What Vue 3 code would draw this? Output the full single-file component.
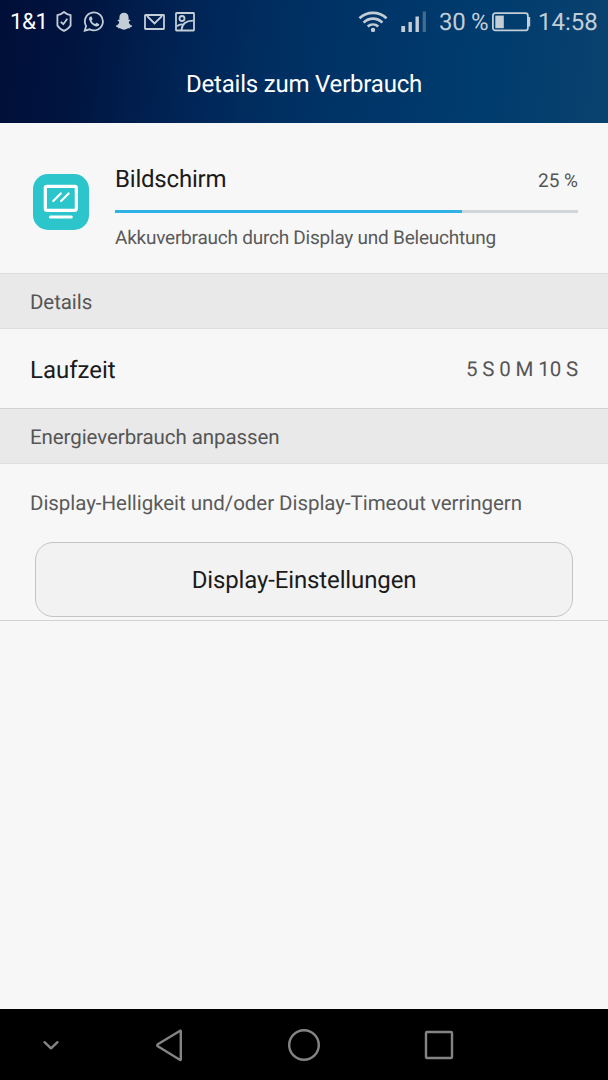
<script setup>
import { ref } from 'vue'

const usage = ref({
  name: 'Bildschirm',
  percent: 25,
  bar: 75,
  info: 'Akkuverbrauch durch Display und Beleuchtung'
})

const runtime = ref('5 S 0 M 10 S')
</script>

<template>
  <div class="screen">
    <header class="header">
      <div class="status">
        <span class="carrier">1&amp;1</span>
        <svg class="shield" width="16" height="22" viewBox="0 0 16 22">
          <path d="M8 1C6.200 2.600 4 3.700 1.400 4.200V14.500C2.600 16.800 5 18.500 8 19.900C11 18.500 13.400 16.800 14.600 14.500V4.200C12 3.700 9.800 2.600 8 1Z" />
          <path d="M4.800 10.800L7.300 13.200L11.300 7.800" />
        </svg>
        <svg class="whatsapp" width="22" height="22" viewBox="0 0 22 22">
          <path d="M1.800 19.600L3.100 14.900A9 9 0 1 1 6.600 18.300Z" />
          <path class="solid" d="M7.600 5.400C6.300 5.800 5.700 7.200 6.200 8.800C7.200 12 9.700 14.500 12.900 15.400C14.500 15.800 16 15 16.300 13.300L13.500 11.700L12.200 13.100C10.500 12.400 9.200 11.100 8.500 9.500L9.600 8.300L8.600 5.400Z" />
        </svg>
        <svg class="snap" width="18" height="20" viewBox="0 0 18 20">
          <path class="solid" d="M9 .8C11.800 .8 13.600 2.700 13.600 5.400V7.700C14.300 8 15.100 7.500 15.400 8.100C15.600 8.900 14.100 9.300 13.800 10C13.700 11.600 15.300 13.200 17.300 13.700C17.500 14.600 16 15 15.200 15.200L14.800 16.300C13 15.900 12.400 16.700 11.300 17.100C9.800 17.800 8.200 17.800 6.700 17.100C5.600 16.700 5 15.900 3.200 16.300L2.800 15.200C2 15 .5 14.600 .7 13.700C2.700 13.200 4.300 11.600 4.200 10C3.900 9.300 2.400 8.900 2.600 8.100C2.900 7.500 3.700 8 4.400 7.700V5.400C4.400 2.700 6.200 .8 9 .8Z" />
        </svg>
        <svg class="mail" width="21" height="17" viewBox="0 0 21 17">
          <rect x="1" y="1" width="19" height="14" rx=".5" />
          <path d="M3 2L10.500 9.500L18 2" />
        </svg>
        <svg class="picture" width="20" height="20" viewBox="0 0 20 20">
          <rect x="1" y="1" width="18" height="17.500" rx=".5" />
          <circle cx="7" cy="6.500" r="2.500" />
          <path d="M6.500 18C7 12.500 11 8.800 18 8.700M2 14.200C4.200 12.400 6.500 12 8.800 12.800" />
        </svg>
        <svg class="wifi" width="30" height="23" viewBox="0 0 30 23">
          <path d="M1.500 7.300C9 0 21 0 28.500 7.300M5.600 11.600C11 6.400 19 6.400 24.400 11.600M9.700 15.600C12.800 12.800 17.200 12.800 20.300 15.600" />
          <circle class="solid" cx="15" cy="18.900" r="2.200" />
        </svg>
        <svg class="signal" width="26" height="22" viewBox="0 0 26 22">
          <rect class="solid" x=".3" y="15" width="3.800" height="6" />
          <rect class="solid" x="7.500" y="11" width="3.400" height="10" />
          <rect class="solid" x="14.500" y="5.500" width="3.400" height="15.500" />
          <rect class="solid faded" x="21.700" y=".5" width="3.200" height="20.500" />
        </svg>
        <span class="battery-text">30 %</span>
        <svg class="battery" width="39" height="20" viewBox="0 0 39 20">
          <rect x=".9" y="1.200" width="35" height="17.200" rx="2.500" />
          <rect class="solid" x="3.300" y="3.600" width="8.500" height="12.600" />
          <path class="solid" d="M36 5H38.200V14.500H36Z" />
        </svg>
        <span class="clock">14:58</span>
      </div>
      <h1>Details zum Verbrauch</h1>
    </header>

    <main class="content">
      <div class="usage">
        <div class="app-icon">
          <svg width="56" height="56" viewBox="0 0 56 56">
            <rect x="12.300" y="12.300" width="31" height="24" rx="1.500" />
            <path d="M20.300 27L27.800 19.500M28.100 27L35.600 19.500" class="glare" />
            <path d="M17.500 43H38.200" />
          </svg>
        </div>
        <div class="usage-body">
          <div class="usage-top">
            <span class="name">{{ usage.name }}</span>
            <span class="percent">{{ usage.percent }} %</span>
          </div>
          <div class="bar">
            <div class="bar-fill" :style="{ width: usage.bar + '%' }"></div>
          </div>
          <p>{{ usage.info }}</p>
        </div>
      </div>

      <h2>Details</h2>
      <div class="row">
        <span class="name">Laufzeit</span>
        <span class="value">{{ runtime }}</span>
      </div>

      <h2>Energieverbrauch anpassen</h2>
      <div class="adjust">
        <p>Display-Helligkeit und/oder Display-Timeout verringern</p>
        <button type="button">Display-Einstellungen</button>
      </div>
    </main>

    <nav class="nav">
      <svg class="nav-hide" width="18" height="14" viewBox="0 0 18 14">
        <path d="M2.500 4.200L9 10.300L15.500 4.200" />
      </svg>
      <svg class="nav-back" width="30" height="38" viewBox="0 0 30 38">
        <path d="M25.800 5V33.500Q25.800 34.300 24.800 33.700L2.800 20.300Q1.600 19.300 2.800 18.300L24.800 4.900Q25.800 4.200 25.800 5Z" />
      </svg>
      <svg class="nav-home" width="34" height="38" viewBox="0 0 34 38">
        <circle cx="17" cy="19" r="14.800" />
      </svg>
      <svg class="nav-recent" width="30" height="34" viewBox="0 0 30 34">
        <rect x="2" y="4" width="26" height="26" rx="1" />
      </svg>
    </nav>
  </div>
</template>

<style>
body {
  margin: 0;
}
</style>

<style scoped>
.screen {
  display: flex;
  flex-direction: column;
  width: 608px;
  height: 1080px;
  background-color: #f7f7f7;
  font-family: Roboto, 'Liberation Sans', sans-serif;
  text-rendering: geometricPrecision;
  color: #1b1b1b;
}
h1, h2, p {
  margin: 0;
  font-weight: 400;
}
svg {
  display: block;
  flex-shrink: 0;
  fill: none;
}

.header {
  height: 123px;
  background: linear-gradient(97deg, #000f37 0%, #001440 13%, #002252 28%, #002d60 43%, #003568 60%, #003c6e 80%, #0a426f 100%);
}
.status {
  display: flex;
  align-items: center;
  height: 44px;
  padding-left: 10px;
  color: #c3cdd8;
  font-size: 24px;
  white-space: nowrap;
}
.status svg {
  stroke: #c3ced7;
  stroke-width: 1.8;
}
.status .solid {
  fill: #c3ced7;
  stroke: none;
}
.status .faded {
  opacity: 0.35;
}
.carrier {
  width: 46px;
  color: #fff;
  font-size: 22.500px;
  letter-spacing: -0.6px;
}
.whatsapp {
  margin-left: 11px;
}
.snap {
  margin-left: 10px;
}
.mail {
  margin-left: 11px;
}
.picture {
  margin-left: 10px;
}
.wifi {
  margin-left: 163px;
}
.status .wifi {
  stroke-width: 2.7;
}
.signal {
  margin-left: 13px;
}
.battery-text {
  width: 53px;
  margin-left: 12px;
  letter-spacing: -0.3px;
}
.clock {
  margin-left: 7px;
}
h1 {
  padding-top: 1px;
  line-height: 78px;
  text-align: center;
  font-size: 24px;
  letter-spacing: -0.2px;
  color: #fff;
}

.content {
  flex: 1;
}
.usage {
  display: flex;
  box-sizing: border-box;
  height: 151px;
  padding: 42px 30px 0 33px;
  border-bottom: 1px solid #dcdcdc;
}
.app-icon {
  width: 56px;
  height: 56px;
  margin: 9px 26px 0 0;
  border-radius: 15px;
  background-color: #2cc5cb;
}
.app-icon svg {
  stroke: #fff;
  stroke-width: 3.2;
  stroke-linecap: round;
}
.app-icon .glare {
  stroke-width: 2.2;
}
.usage-body {
  flex: 1;
}
.usage-top {
  display: flex;
  justify-content: space-between;
  height: 45px;
}
.name {
  font-size: 24px;
  line-height: 28px;
}
.usage .name {
  letter-spacing: -0.2px;
}
.percent {
  padding-top: 2px;
  font-size: 19px;
  line-height: 28px;
  color: #555;
}
.bar {
  height: 3px;
  background-color: #d2d6d8;
}
.bar-fill {
  height: 3px;
  background-color: #2fb2e6;
}
.usage p {
  margin-top: 12px;
  font-size: 19px;
  line-height: 26px;
  letter-spacing: -0.23px;
  color: #5a5a5a;
}

h2 {
  box-sizing: border-box;
  height: 55px;
  padding-left: 30px;
  border-bottom: 1px solid #dedede;
  background-color: #e9e9e9;
  line-height: 58px;
  font-size: 20.500px;
  letter-spacing: -0.08px;
  color: #555;
}
.row {
  display: flex;
  align-items: center;
  justify-content: space-between;
  box-sizing: border-box;
  height: 80px;
  padding: 2px 30px 0;
  border-bottom: 1px solid #d2d2d2;
}
.value {
  font-size: 20.500px;
  letter-spacing: -0.14px;
  color: #555;
}
.adjust {
  box-sizing: border-box;
  height: 157px;
  padding: 27px 35px 0;
  border-bottom: 1px solid #d2d2d2;
}
.adjust p {
  margin: 0 -5px 25px;
  line-height: 26px;
  font-size: 20.500px;
  letter-spacing: -0.05px;
  color: #5a5a5a;
}
button {
  display: block;
  width: 538px;
  height: 75px;
  padding: 0;
  border: 1px solid #c4c4c4;
  border-radius: 18px;
  background-color: #f2f2f2;
  font-family: inherit;
  font-size: 24px;
  letter-spacing: -0.13px;
  text-rendering: inherit;
  color: #1b1b1b;
}

.nav {
  display: flex;
  align-items: center;
  height: 71px;
  padding-left: 42px;
  background-color: #000;
}
.nav svg {
  stroke: #848484;
  stroke-width: 2.4;
  stroke-linejoin: round;
  stroke-linecap: round;
}
.nav-back {
  margin-left: 95px;
}
.nav-home {
  margin-left: 102px;
}
.nav-recent {
  margin-left: 103px;
}
</style>
